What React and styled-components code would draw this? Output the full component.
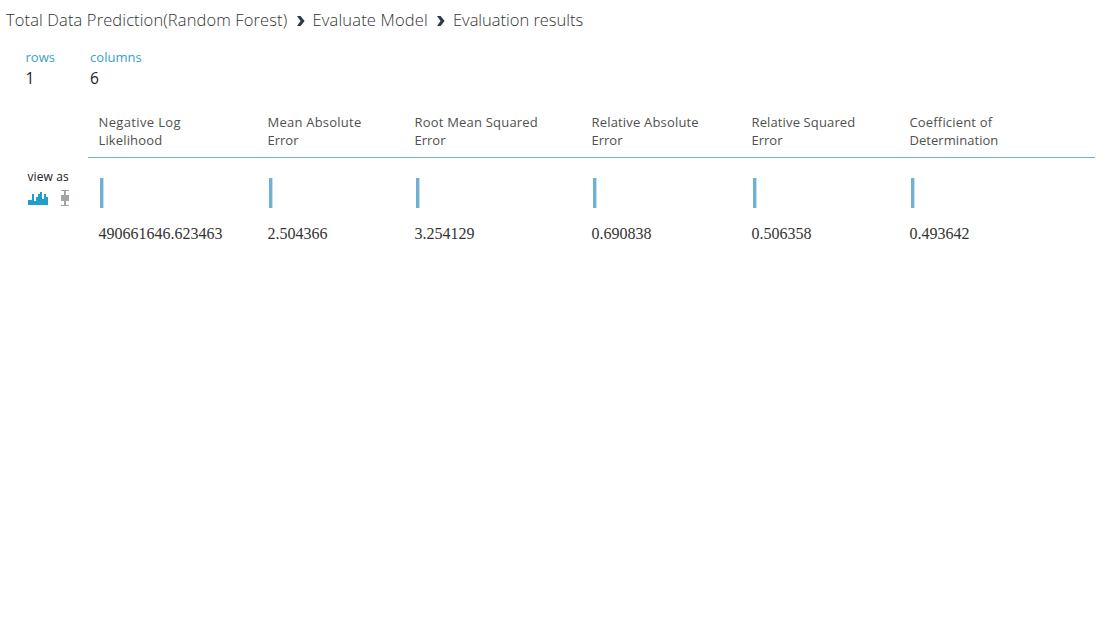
import React from 'react';
import styled, { createGlobalStyle } from 'styled-components';

const GlobalStyle = createGlobalStyle`
  body { margin: 0; background: #fff; font-family: "Open Sans", "Noto Sans", sans-serif; color: #222; }
`;
const Page = styled.main`
  height: 632px;
  overflow: hidden;
`;
const Breadcrumb = styled.nav`
  display: flex;
  align-items: center;
  height: 40px;
  padding-left: 6px;
`;
const Crumb = styled.span`
  width: ${(p) => p.$width}px;
  font-size: 16.5px;
  font-weight: 300;
  line-height: 22px;
  letter-spacing: ${(p) => p.$spacing}px;
  white-space: nowrap;
  color: #333;
`;
const Chevron = styled.svg`
  width: 8px;
  height: 10px;
  margin: 2px 8px 0 9.5px;
  flex: none;
`;
const Summary = styled.section`
  display: flex;
  height: 58px;
  padding: 7px 0 0 25.5px;
  box-sizing: border-box;
`;
const Stat = styled.div`
  width: 64.5px;
`;
const StatLabel = styled.div`
  font-size: 13px;
  line-height: 20px;
  letter-spacing: 0.05px;
  color: #3a9fcb;
`;
const StatValue = styled.div`
  font-size: 15.5px;
  line-height: 22px;
`;
const Results = styled.section`
  display: flex;
`;
const ViewAs = styled.aside`
  width: 88px;
  box-sizing: border-box;
  padding: 70px 0 0 28px;
`;
const ViewLabel = styled.div`
  margin-left: -0.5px;
  font-size: 12px;
  line-height: 18px;
  letter-spacing: 0.1px;
`;
const ViewIcons = styled.div`
  display: flex;
  gap: 12px;
  padding-top: 4px;
`;
const Icon = styled.svg`
  display: block;
`;
const Table = styled.div`
  width: 1007px;
`;
const Row = styled.div`
  display: grid;
  grid-template-columns: 169px 147px 177px 160px 158px 1fr;
`;
const HeaderRow = styled(Row)`
  height: 60px;
  box-sizing: border-box;
  padding-top: 15px;
  border-bottom: 1px solid #6fb0d0;
`;
const HeaderCell = styled.div`
  padding-left: 10.5px;
  font-size: 13px;
  line-height: 18px;
  color: #505050;
`;
const HeaderLine = styled.div`
  letter-spacing: ${(p) => p.$spacing}px;
  white-space: nowrap;
`;
const ChartRow = styled(Row)`
  padding-top: 20px;
`;
const Bar = styled.div`
  width: 3px;
  height: 30px;
  margin-left: 12px;
  background: #6fb0d3;
  border-right: 1px solid #c5dfed;
`;
const ValueCell = styled.div`
  padding: 16px 0 0 10.5px;
  font: 16px/20px "Liberation Serif", serif;
  color: #333;
`;

const metrics = [
  { lines: ['Negative Log', 'Likelihood'], spacing: [0.36, 0.14], value: '490661646.623463' },
  { lines: ['Mean Absolute', 'Error'], spacing: [0.23, 0], value: '2.504366' },
  { lines: ['Root Mean Squared', 'Error'], spacing: [0.2, 0], value: '3.254129' },
  { lines: ['Relative Absolute', 'Error'], spacing: [0.18, 0], value: '0.690838' },
  { lines: ['Relative Squared', 'Error'], spacing: [0.13, 0], value: '0.506358' },
  { lines: ['Coefficient of', 'Determination'], spacing: [0.17, 0.05], value: '0.493642' },
];

const Separator = () => (
  <Chevron viewBox="0 0 8 10">
    <path d="M0 0H3.6L7.6 5L3.6 10H0L3.6 5Z" fill="#2f3943" />
  </Chevron>
);

export default function App() {
  return (
    <Page>
      <GlobalStyle />
      <Breadcrumb>
        <Crumb $width={281} $spacing={0.12}>Total Data Prediction(Random Forest)</Crumb>
        <Separator />
        <Crumb $width={115} $spacing={0.17}>Evaluate Model</Crumb>
        <Separator />
        <Crumb $width={130} $spacing={-0.02}>Evaluation results</Crumb>
      </Breadcrumb>
      <Summary>
        <Stat><StatLabel>rows</StatLabel><StatValue>1</StatValue></Stat>
        <Stat><StatLabel>columns</StatLabel><StatValue>6</StatValue></Stat>
      </Summary>
      <Results>
        <ViewAs>
          <ViewLabel>view as</ViewLabel>
          <ViewIcons>
            <Icon width="20" height="16" viewBox="0 0 20 16" shapeRendering="crispEdges">
              <path d="M0 15V10H4V4H6V11H8V7H10V4H12V2H14V9H16V4H18V7H20V15Z" fill="#219ec9" />
            </Icon>
            <Icon width="10" height="16" viewBox="0 0 10 16" shapeRendering="crispEdges">
              <path d="M1 0H9V1H6V5H9V11H6V15H9V16H1V15H4V11H1V5H4V1H1Z" fill="#a2a5a8" />
            </Icon>
          </ViewIcons>
        </ViewAs>
        <Table>
          <HeaderRow>
            {metrics.map(({ lines, spacing }) => (
              <HeaderCell key={lines[0]}>
                {lines.map((line, i) => <HeaderLine key={line} $spacing={spacing[i]}>{line}</HeaderLine>)}
              </HeaderCell>
            ))}
          </HeaderRow>
          <ChartRow>{metrics.map(({ lines }) => <Bar key={lines[0]} />)}</ChartRow>
          <Row>{metrics.map(({ lines, value }) => <ValueCell key={lines[0]}>{value}</ValueCell>)}</Row>
        </Table>
      </Results>
    </Page>
  );
}
